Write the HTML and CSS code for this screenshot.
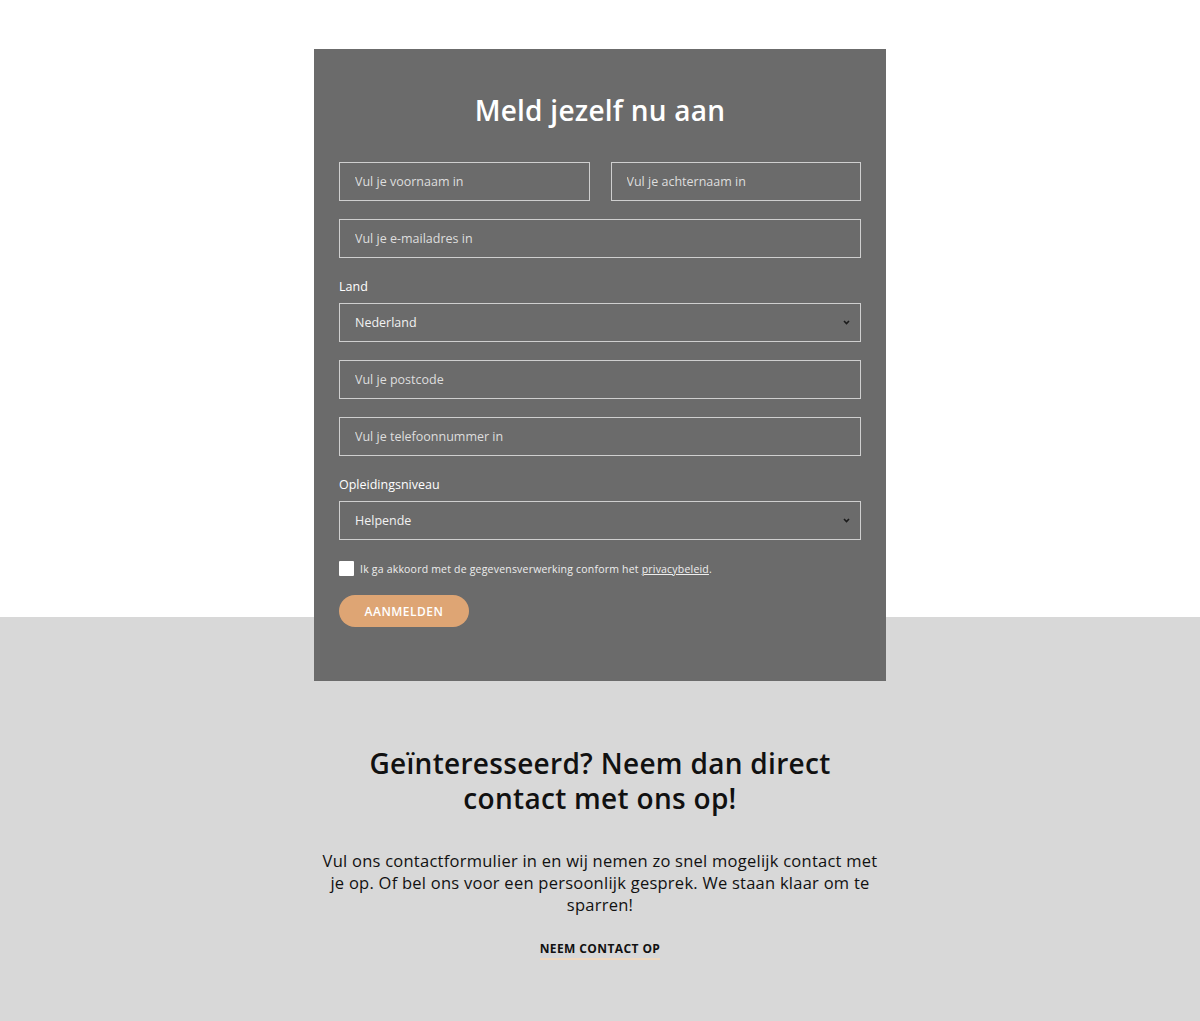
FILE: index.html
```html
<!DOCTYPE html>
<html lang="nl">
<head>
<meta charset="utf-8">
<title>Meld jezelf nu aan</title>
<link rel="stylesheet" href="styles.css">
</head>
<body>
<main class="page">
  <section class="signup">
    <form class="card">
      <h1 class="card-title">Meld jezelf nu aan</h1>
      <div class="row two">
        <input class="field" type="text" placeholder="Vul je voornaam in">
        <input class="field" type="text" placeholder="Vul je achternaam in">
      </div>
      <div class="row">
        <input class="field" type="email" placeholder="Vul je e-mailadres in">
      </div>
      <label class="label">Land</label>
      <div class="row select-wrap">
        <select class="field select">
          <option>Nederland</option>
        </select>
        <svg class="chev" width="7" height="5" viewBox="0 0 7 5"><path d="M1 1 L3.5 3.5 L6 1" fill="none" stroke="#1a1a1a" stroke-width="1.6"/></svg>
      </div>
      <div class="row">
        <input class="field" type="text" placeholder="Vul je postcode">
      </div>
      <div class="row">
        <input class="field" type="tel" placeholder="Vul je telefoonnummer in">
      </div>
      <label class="label">Opleidingsniveau</label>
      <div class="row select-wrap">
        <select class="field select">
          <option>Helpende</option>
        </select>
        <svg class="chev" width="7" height="5" viewBox="0 0 7 5"><path d="M1 1 L3.5 3.5 L6 1" fill="none" stroke="#1a1a1a" stroke-width="1.6"/></svg>
      </div>
      <div class="consent">
        <span class="box"></span>
        <span class="consent-text">Ik ga akkoord met de gegevensverwerking conform het <a href="#" class="privacy">privacybeleid</a>.</span>
      </div>
      <button type="button" class="btn">AANMELDEN</button>
    </form>
  </section>
  <section class="contact">
    <h2 class="contact-title">Geïnteresseerd? Neem dan direct contact met ons op!</h2>
    <p class="contact-text">Vul ons contactformulier in en wij nemen zo snel mogelijk contact met je op. Of bel ons voor een persoonlijk gesprek. We staan klaar om te sparren!</p>
    <a href="#" class="contact-link">NEEM CONTACT OP</a>
  </section>
</main>
</body>
</html>
```
FILE: styles.css
```css
* { box-sizing: border-box; }
html, body { margin: 0; padding: 0; }
body {
  font-family: "Open Sans", "Liberation Sans", sans-serif;
  background: linear-gradient(to bottom, #ffffff 0, #ffffff 617px, #d8d8d8 617px);
  min-height: 1021px;
}
.page { display: flex; flex-direction: column; align-items: center; }
.signup { padding-top: 49px; }
.card {
  width: 572px;
  background: #6b6b6b;
  padding: 44px 25px 54px 25px;
  display: flex;
  flex-direction: column;
}
.card-title {
  margin: 0 0 35px 0;
  text-align: center;
  color: #ffffff;
  font-size: 28px;
  line-height: 34px;
  font-weight: 600;
  letter-spacing: 0.25px;
}
.row { display: flex; margin-bottom: 18px; }
.row.two { gap: 21px; }
.row.two .field { flex: 1; }
.field {
  width: 100%;
  height: 39px;
  border: 1px solid #cfcfcf;
  background: transparent;
  color: #f2f2f2;
  font-family: inherit;
  font-size: 12.5px;
  padding: 0 15px;
  outline: none;
  border-radius: 0;
}
.field::placeholder { color: #dedede; }
.label {
  color: #ffffff;
  font-size: 12.5px;
  line-height: 17px;
  margin: 2px 0 8px 0;
  font-weight: 500;
}
.select-wrap { position: relative; }
.select { appearance: none; -webkit-appearance: none; }
.chev { position: absolute; right: 11px; top: 17px; }
.consent {
  display: flex;
  align-items: center;
  gap: 6px;
  margin-top: 3px;
  margin-bottom: 19px;
}
.box {
  width: 15px;
  height: 15px;
  background: #ffffff;
  border-radius: 1px;
  flex: none;
}
.consent-text {
  color: #eeeeee;
  font-size: 10.5px;
  letter-spacing: 0.2px;
}
.privacy { color: #eeeeee; text-decoration: underline; }
.btn {
  width: 130px;
  height: 32px;
  border: none;
  border-radius: 16px;
  background: #dea574;
  color: #ffffff;
  font-family: inherit;
  font-weight: 600;
  font-size: 12px;
  letter-spacing: 0.5px;
  padding: 0;
  cursor: pointer;
}
.contact {
  width: 572px;
  padding-top: 65px;
  display: flex;
  flex-direction: column;
  align-items: center;
  text-align: center;
}
.contact-title {
  margin: 0;
  max-width: 490px;
  font-size: 28px;
  line-height: 35px;
  font-weight: 600;
  color: #111111;
  letter-spacing: 0.3px;
}
.contact-text {
  margin: 34px 0 0 0;
  font-size: 16.5px;
  line-height: 22px;
  color: #111111;
  max-width: 566px;
  letter-spacing: 0.25px;
}
.contact-link {
  margin-top: 24px;
  font-size: 12px;
  font-weight: 700;
  letter-spacing: 0.4px;
  color: #111111;
  text-decoration: none;
  border-bottom: 2px solid #efd9c1;
  padding-bottom: 1px;
}
```
